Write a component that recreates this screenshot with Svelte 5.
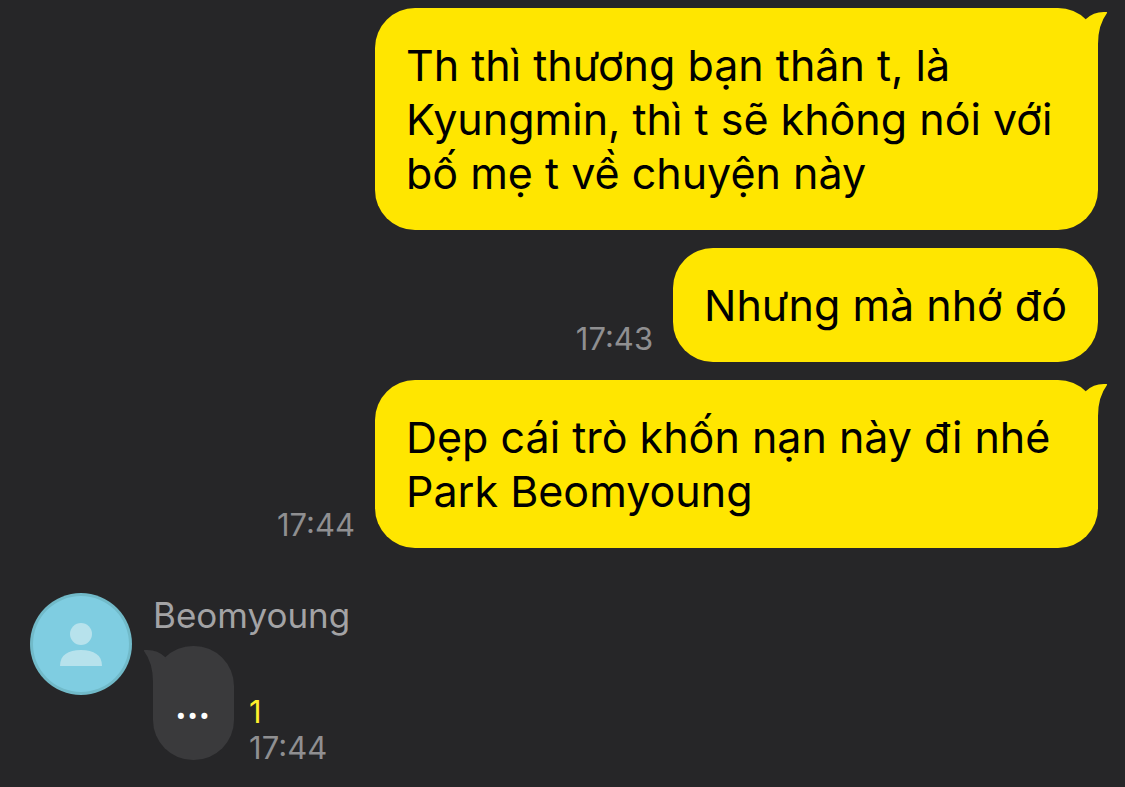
<script>
  const sent = [
    { text: 'Th thì thương bạn thân t, là Kyungmin, thì t sẽ không nói với bố mẹ t về chuyện này', time: '', tail: true },
    { text: 'Nhưng mà nhớ đó', time: '17:43', tail: false },
    { text: 'Dẹp cái trò khốn nạn này đi nhé Park Beomyoung', time: '17:44', tail: true }
  ];
</script>

{#snippet tail()}
  <svg class="tail" viewBox="0 0 24 40" aria-hidden="true">
    <path d="M0 11 L2 8 Q10 0 22.500 1 Q23.500 1 23 2 Q14 14 14 33 L14 40 L0 40 Z" />
  </svg>
{/snippet}

<main>
  <section class="sent">
    {#each sent as message}
      <div class="row">
        {#if message.time}<time>{message.time}</time>{/if}
        <div class="bubble">
          {#if message.tail}{@render tail()}{/if}
          <p>{message.text}</p>
        </div>
      </div>
    {/each}
  </section>

  <section class="received">
    <svg class="avatar" viewBox="0 0 102 102" aria-hidden="true">
      <circle cx="51" cy="51" r="51" fill="#71bac9" />
      <circle cx="51" cy="51" r="48" fill="#7fcde1" />
      <circle cx="51" cy="41" r="11" fill="#b7e2ec" />
      <path d="M30 73 C30 62 38 57 51 57 C64 57 72 62 72 73 Z" fill="#b7e2ec" />
    </svg>
    <div class="thread">
      <h2>Beomyoung</h2>
      <div class="reply">
        <div class="bubble dark">
          {@render tail()}
          <p>...</p>
        </div>
        <div class="meta">
          <span class="unread">1</span>
          <time>17:44</time>
        </div>
      </div>
    </div>
  </section>
</main>

<style>
  :global(body) {
    margin: 0;
    background: #262628;
  }
  main {
    box-sizing: border-box;
    min-height: 100vh;
    padding: 8px 27px 27px 30px;
    font-family: Inter, 'Noto Sans', sans-serif;
    color: #000;
  }
  .sent {
    display: flex;
    flex-direction: column;
    gap: 18px;
  }
  .row {
    display: flex;
    justify-content: flex-end;
    align-items: flex-end;
    gap: 20px;
  }
  .bubble {
    position: relative;
    box-sizing: border-box;
    max-width: 723px;
    padding: 30px 31px;
    border-radius: 40px;
    background: #ffe600;
    color: #000;
    font-size: 43px;
    line-height: 54px;
  }
  p {
    margin: 0;
  }
  .tail {
    position: absolute;
    top: 3px;
    right: -10px;
    width: 24px;
    height: 40px;
    fill: #ffe600;
  }
  time {
    color: #8f8f91;
    font-size: 31px;
    line-height: 24px;
    padding-bottom: 11px;
  }
  .received {
    display: flex;
    align-items: flex-start;
    gap: 21px;
    margin-top: 45px;
  }
  .avatar {
    flex: none;
    width: 102px;
    height: 102px;
  }
  h2 {
    margin: 0 0 9px;
    color: #a3a3a5;
    font-size: 35px;
    font-weight: 400;
    line-height: 44px;
  }
  .reply {
    display: flex;
    align-items: flex-end;
    gap: 15px;
  }
  .dark {
    padding: 30px 24px 30px 22px;
    background: #3a3a3c;
    color: #fff;
    font-family: 'Noto Sans', sans-serif;
    font-weight: 500;
  }
  .dark .tail {
    right: auto;
    left: -10px;
    fill: #3a3a3c;
    transform: scaleX(-1);
  }
  .meta {
    display: flex;
    flex-direction: column;
    gap: 12px;
  }
  .meta time {
    padding-bottom: 0;
  }
  .unread {
    color: #fff02c;
    font-size: 31px;
    line-height: 24px;
  }
</style>
